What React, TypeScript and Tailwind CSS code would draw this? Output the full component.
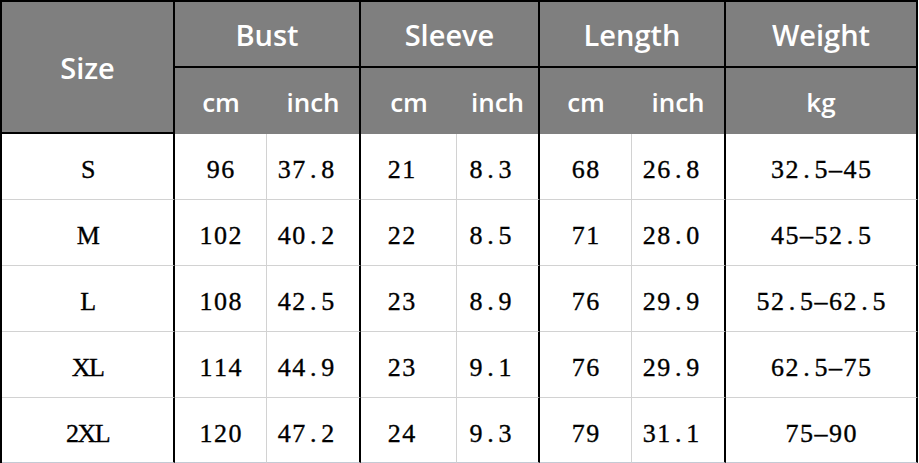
import React from 'react';

type Row = {
  size: string;
  bust: [string, string];
  sleeve: [string, string];
  length: [string, string];
  weight: string;
};

const rows: Row[] = [
  { size: 'S', bust: ['96', '37.8'], sleeve: ['21', '8.3'], length: ['68', '26.8'], weight: '32.5-45' },
  { size: 'M', bust: ['102', '40.2'], sleeve: ['22', '8.5'], length: ['71', '28.0'], weight: '45-52.5' },
  { size: 'L', bust: ['108', '42.5'], sleeve: ['23', '8.9'], length: ['76', '29.9'], weight: '52.5-62.5' },
  { size: 'XL', bust: ['114', '44.9'], sleeve: ['23', '9.1'], length: ['76', '29.9'], weight: '62.5-75' },
  { size: '2XL', bust: ['120', '47.2'], sleeve: ['24', '9.3'], length: ['79', '31.1'], weight: '75-90' },
];

// SimSun-like fixed cells: every character takes the same width
const Mono = ({ text, shift }: { text: string; shift?: boolean }) => (
  <span className={`flex ${shift ? 'pr-[14px]' : ''}`}>
    {text.split('').map((ch, i) => (
      <span key={i} className="inline-block w-[14.5px] text-center">
        {ch === '-' ? '\u2013' : ch}
      </span>
    ))}
  </span>
);

const head = "flex items-center justify-center pt-[2px] bg-[#7f7f7f] text-white font-['Open_Sans',sans-serif] font-semibold";
const cell = "flex items-center justify-center pt-[6px] text-[26px] text-black [-webkit-text-stroke:0.35px_#000] font-['Liberation_Serif',serif]";

export default function App() {
  return (
    <div className="w-[919px] h-[463px] overflow-hidden bg-white">
      <div className="grid w-[918px] grid-cols-[173px_92px_94px_96px_83px_92px_94px_192px] grid-rows-[66px_66px_66px_66px_66px_66px_65px] border-l-2 border-t-2 border-black">
        <div className={`${head} row-span-2 border-r-2 border-b-2 border-black text-[29px]`}>Size</div>
        <div className={`${head} col-span-2 border-r-2 border-b-2 border-black text-[29px]`}>Bust</div>
        <div className={`${head} col-span-2 border-r-2 border-b-2 border-black text-[29px]`}>Sleeve</div>
        <div className={`${head} col-span-2 border-r-2 border-b-2 border-black text-[29px]`}>Length</div>
        <div className={`${head} border-r-2 border-b-2 border-black text-[29px]`}>Weight</div>

        <div className={`${head} text-[26px]`}>cm</div>
        <div className={`${head} border-r-2 border-black text-[26px]`}>inch</div>
        <div className={`${head} text-[26px]`}>cm</div>
        <div className={`${head} border-r-2 border-black text-[26px]`}>inch</div>
        <div className={`${head} text-[26px]`}>cm</div>
        <div className={`${head} border-r-2 border-black text-[26px]`}>inch</div>
        <div className={`${head} border-r-2 border-black text-[26px]`}>kg</div>

        {rows.map((r, i) => {
          const bottom = i === rows.length - 1 ? 'border-b border-b-[#c4cad4]' : 'border-b border-b-[#d2d2d2]';
          return (
            <React.Fragment key={r.size}>
              <div className={`${cell} ${bottom} border-r-2 border-r-black`}>
                <span className="tracking-[-1.5px]">{r.size}</span>
              </div>
              <div className={`${cell} ${bottom} border-r border-r-[#d2d2d2]`}><Mono text={r.bust[0]} /></div>
              <div className={`${cell} ${bottom} border-r-2 border-r-black`}><Mono text={r.bust[1]} shift /></div>
              <div className={`${cell} ${bottom} border-r border-r-[#d2d2d2]`}><Mono text={r.sleeve[0]} shift /></div>
              <div className={`${cell} ${bottom} border-r-2 border-r-black`}><Mono text={r.sleeve[1]} shift /></div>
              <div className={`${cell} ${bottom} border-r border-r-[#d2d2d2]`}><Mono text={r.length[0]} /></div>
              <div className={`${cell} ${bottom} border-r-2 border-r-black`}><Mono text={r.length[1]} shift /></div>
              <div className={`${cell} ${bottom} border-r-2 border-r-black`}><Mono text={r.weight} /></div>
            </React.Fragment>
          );
        })}
      </div>
    </div>
  );
}
